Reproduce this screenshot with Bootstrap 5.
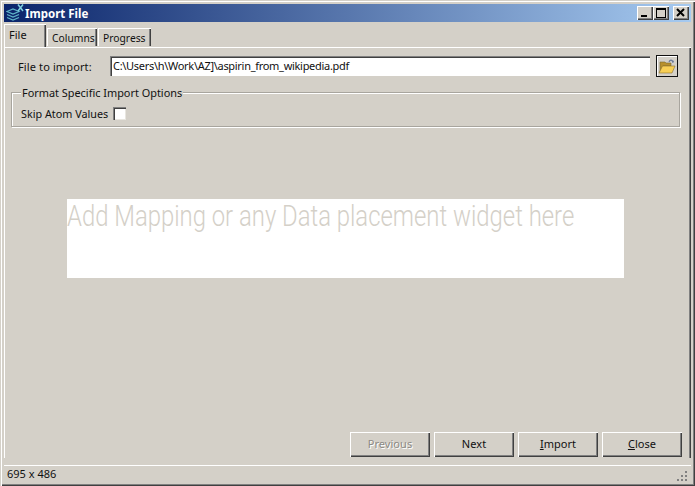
<!DOCTYPE html>
<html lang="en"><head><meta charset="utf-8"><title>Import File</title>
<link href="https://cdn.jsdelivr.net/npm/bootstrap@5.3.0/dist/css/bootstrap.min.css" rel="stylesheet">
<style>
html,body{margin:0;height:486px;overflow:hidden;background:#d4d0c8}
body{font:11px/13px "Noto Sans",sans-serif;color:#111}
.win{width:695px;height:486px;padding:4px 4px 0 4px;box-shadow:inset 1px 1px 0 #d4d0c8,inset 2px 2px 0 #fff,inset -1px -1px 0 #404040,inset -2px -2px 0 #808080}
.tbar{height:18px;flex:none;background:linear-gradient(90deg,#0a246a,#a6caf0);color:#fff;padding:0 2px}
.tbar svg{flex:none}
.ttl{font:700 11.500px/20px "Noto Sans",sans-serif;margin:2px 0 0 0}
.wbtn{width:16px;height:14px;background:#d4d0c8;box-shadow:inset 1px 1px 0 #fff,inset -1px -1px 0 #404040,inset -2px -2px 0 #808080;display:flex;align-items:center;justify-content:center;padding:0;border:0}
.tabsrow{height:24px;flex:none;margin-top:1px}
.tabi{height:18px;margin-top:5px;padding:4px 0 0 5px;background:#d4d0c8;font:10.300px/13px "Noto Sans",sans-serif;box-shadow:inset 1px 1px 0 #fff,inset -1px 0 0 #404040,inset -2px 0 0 #808080;margin-left:1px}
.tabw1{width:50px}
.tabw2{width:53px}
.tabi.on{margin-top:1px;margin-left:0;padding:4px 0 0 5px;width:42px;position:relative;z-index:1;height:23px;font-size:11px}
.pane{flex:1 1 auto;min-height:0;box-shadow:inset 1px 1px 0 #fff,inset -1px 0 0 #404040,inset -2px 0 0 #808080;padding:8px 0 0 7px}
.frow{height:22px;flex:none}
.lbl{width:99px;flex:none;padding-left:7px;letter-spacing:.12px}
.finput{width:540px;flex:none;height:20px;border:0;border-radius:0;padding:0 3px;font:11px/20px "Noto Sans",sans-serif;letter-spacing:-.3px;color:#111;background:#fff;box-shadow:inset 1px 1px 0 #808080,inset 2px 2px 0 #404040,inset 0 -1px 0 #fff;margin-right:6px}
.fbtn{width:22px;height:22px;flex:none;padding:0;border:0;border-radius:0;background:#d4d0c8;box-shadow:inset 0 0 0 1px #111,inset 2px 2px 0 #fff;display:flex;align-items:center;justify-content:center}
.grp{width:669px;height:35px;margin-top:15px;border:1px solid #a8a59e;box-shadow:1px 1px 0 #fff,inset 1px 1px 0 #fff;padding:0 0 0 9px;position:relative}
.grpt{position:absolute;left:9px;top:-7px;background:#d4d0c8;padding:0 1px;font-size:10.900px;white-space:nowrap}
.skip{margin-top:14px;font-size:10.800px}
.cbx{width:13px;height:13px;background:#fff;margin-left:5px;box-shadow:inset 1px 1px 0 #808080,inset 2px 2px 0 #404040,inset -1px -1px 0 #e8e6e0}
.drop{width:557px;height:79px;margin:72px 0 0 56px;background:#fff;color:#d4d0c8;font:300 29px/35px "Roboto",sans-serif;white-space:nowrap;overflow:hidden}
.drop span{display:inline-block;transform-origin:0 0;transform:scaleX(.823)}
.acts{margin-top:154px;margin-left:339px;gap:4px}
.wb{width:80px;height:25px;padding:0 0 2px;border:0;border-radius:0;background:#d4d0c8;color:#111;font:11px/22px "Noto Sans",sans-serif;box-shadow:inset 1px 1px 0 #fff,inset -1px -1px 0 #404040,inset -2px -2px 0 #808080;letter-spacing:.05px}
.wb:disabled{color:#8c8a84;opacity:1;background:#d4d0c8;text-shadow:1px 1px 0 #fff}
.sbar{height:21px;flex:none;padding:0 3px 0 3px;box-shadow:inset 0 1px 0 #fff;margin-top:7px}
.sbar .stxt{line-height:18px}
.sbar svg{margin-top:5px}
</style></head><body>
<div class="win d-flex flex-column">
 <div class="tbar d-flex align-items-center">
  <svg width="19" height="18" viewBox="0 0 19 18"><path d="M1 7.500l6-2.500 6 2.500-6 2.500zM1 10.500l6 2.500 6-2.500M1 13.500l6 2.500 6-2.500" fill="none" stroke="#5fb4c8" stroke-width="1.200"/><path d="M12 0.500l5 6.500M17 0.500l-5 6.500" stroke="#7fd0e0" stroke-width="1.500"/></svg>
  <span class="ttl">Import File</span>
  <div class="ms-auto d-flex">
   <button class="wbtn" aria-label="Minimize"><svg width="10" height="10"><rect x="1" y="7" width="6" height="2" fill="#000"/></svg></button>
   <button class="wbtn" aria-label="Maximize"><svg width="10" height="10"><path d="M0 0h10v10h-10zM1 2v7h8v-7z" fill="#000" fill-rule="evenodd"/></svg></button>
   <button class="wbtn ms-1" aria-label="Close"><svg width="10" height="10"><path d="M1 1l7 7M8 1l-7 7" stroke="#000" stroke-width="2"/></svg></button>
  </div>
 </div>
 <div class="tabsrow d-flex">
  <div class="tabi on">File</div><div class="tabi tabw1">Columns</div><div class="tabi tabw2">Progress</div>
 </div>
 <div class="pane">
  <div class="frow d-flex align-items-center">
   <span class="lbl">File to import:</span>
   <input class="form-control finput" value="C:\Users\h\Work\AZ]\aspirin_from_wikipedia.pdf" aria-label="File to import">
   <button class="btn fbtn" aria-label="Browse"><svg width="18" height="16" viewBox="0 0 18 16"><path d="M2 4h5l1 1h5v3H5L2 14z" fill="#b8902c" stroke="#7a6a30" stroke-width=".6"/><path d="M4.500 8H17l-3 7H1z" fill="#f8cf55" stroke="#8a7030" stroke-width=".6"/><path d="M11 4c1-2.500 3-2.500 4 0l-1 .2M15 4l.5-1.200" fill="none" stroke="#6a7a9a" stroke-width="1.200"/></svg></button>
  </div>
  <div class="grp">
   <span class="grpt">Format Specific Import Options</span>
   <div class="skip d-flex align-items-center"><span>Skip Atom Values</span><span class="cbx"></span></div>
  </div>
  <div class="drop"><span>Add Mapping or any Data placement widget here</span></div>
  <div class="acts d-flex">
   <button class="btn wb" disabled>Previous</button>
   <button class="btn wb">Next</button>
   <button class="btn wb"><u>I</u>mport</button>
   <button class="btn wb"><u>C</u>lose</button>
  </div>
 </div>
 <div class="sbar d-flex align-items-start justify-content-between">
  <span class="stxt">695 x 486</span>
  <svg width="12" height="12" viewBox="0 0 12 12" fill="#808080"><rect x="9" y="1" width="2" height="2"/><rect x="5" y="5" width="2" height="2"/><rect x="9" y="5" width="2" height="2"/><rect x="1" y="9" width="2" height="2"/><rect x="5" y="9" width="2" height="2"/><rect x="9" y="9" width="2" height="2"/></svg>
 </div>
</div>
</body></html>
